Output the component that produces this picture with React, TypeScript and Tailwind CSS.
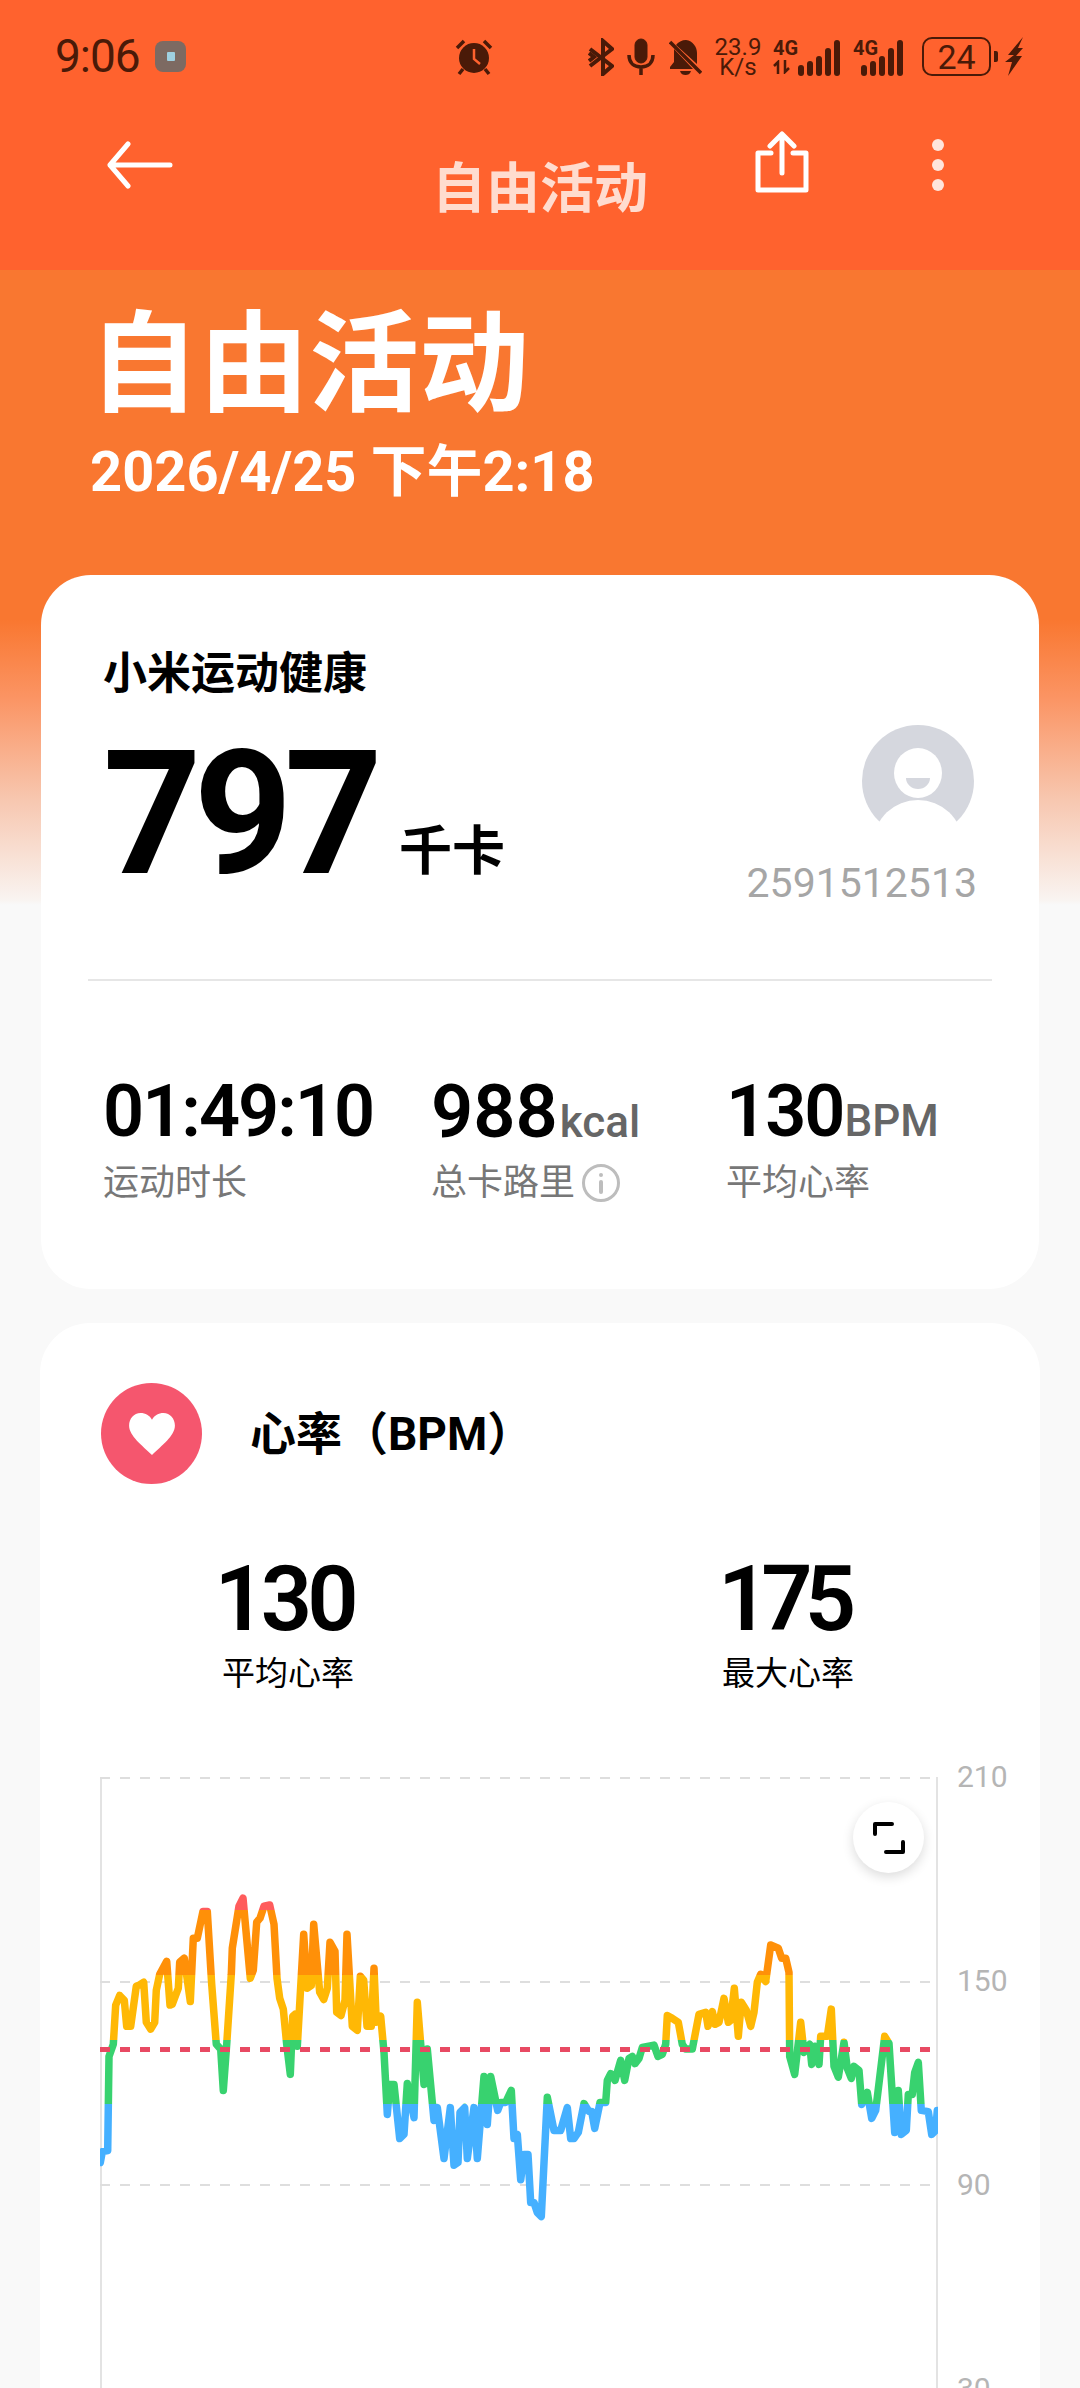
// chart trace, read off the reference: x in px from the axis, y in px from the top grid line
const leftTrace = [
  [124, 1005], [130, 978], [146, 975], [150, 740], [163, 710], [170, 612], [182, 588], [196, 600], [203, 665], [215, 665],
  [232, 565], [240, 562], [254, 555], [262, 655], [275, 672], [287, 655], [292, 575], [302, 535], [323, 503], [333, 612],
  [340, 610], [358, 570], [362, 505], [376, 495], [394, 603], [403, 445], [415, 445], [432, 378], [445, 378], [458, 560],
  [472, 710], [485, 722], [493, 825], [503, 710], [517, 535], [520, 470], [540, 365], [552, 345], [574, 545], [583, 525],
  [593, 405], [603, 395], [615, 365], [632, 362], [645, 410], [654, 545], [662, 595], [673, 622], [683, 710], [694, 785],
  [701, 640], [708, 635], [715, 715], [734, 435], [745, 570], [757, 563], [764, 410], [782, 580], [794, 598], [805, 570],
  [813, 455], [828, 478], [833, 630], [846, 638], [858, 600], [864, 435], [880, 665], [895, 675], [904, 540], [914, 550],
  [924, 665], [937, 665], [945, 520], [952, 655], [965, 640], [975, 730], [985, 885], [992, 810], [1005, 810], [1022, 945],
  [1035, 935], [1045, 808], [1065, 893], [1075, 605], [1095, 810], [1105, 722], [1125, 900], [1135, 868], [1155, 995],
  [1174, 868], [1185, 1012], [1197, 1005], [1203, 880], [1217, 868], [1225, 995], [1245, 868], [1255, 995], [1275, 790],
  [1285, 910], [1295, 790], [1316, 875],
];

const rightTrace = [
  [5, 855], [20, 855], [37, 825], [45, 945], [55, 935], [65, 1048], [75, 985], [87, 985], [95, 1105], [105, 1105],
  [115, 1130], [127, 1140], [145, 842], [165, 925], [185, 925], [205, 868], [215, 945], [225, 945], [238, 930], [255, 858],
  [270, 878], [278, 878], [287, 920], [303, 855], [320, 855], [325, 800], [335, 783], [348, 800], [365, 750], [377, 800],
  [390, 745], [400, 740], [408, 758], [420, 745], [430, 718], [465, 712], [477, 740], [490, 735], [500, 710], [505, 638],
  [520, 645], [538, 655], [550, 710], [560, 722], [580, 722], [600, 635], [620, 630], [627, 665], [640, 628], [648, 660],
  [660, 655], [675, 595], [688, 655], [695, 650], [706, 570], [718, 690], [727, 605], [742, 625], [755, 665], [765, 630],
  [775, 555], [785, 535], [800, 553], [815, 462], [838, 470], [848, 495], [860, 495], [870, 530], [872, 740], [887, 785],
  [905, 655], [915, 730], [932, 710], [938, 760], [948, 715], [960, 760], [965, 690], [985, 690], [997, 622], [1005, 765],
  [1018, 792], [1035, 705], [1045, 770], [1057, 795], [1065, 765], [1080, 775], [1088, 860], [1105, 830], [1118, 895],
  [1130, 875], [1157, 690], [1170, 708], [1187, 930], [1198, 825], [1207, 935], [1222, 925], [1228, 835], [1240, 835],
  [1247, 780], [1258, 755], [1267, 875], [1288, 878], [1298, 935], [1310, 925], [1315, 875],
];

const tracePath = [...leftTrace, ...rightTrace.map(([x, y]) => [x + 1320, y])]
  .map(([x, y], i) => `${i ? "L" : "M"}${(x / 3 - 41).toFixed(1)} ${(y / 2.497 - 17).toFixed(1)}`)
  .join(" ");

const SignalBars = ({ heights }: { heights: number[] }) => (
  <div className="flex items-end gap-[3px]">
    {heights.map((h, i) => (
      <div key={i} className="w-[6px] rounded-[3px] bg-[#4a1a08]" style={{ height: h }} />
    ))}
  </div>
);

const StatusBar = () => (
  <div className="flex h-[39px] items-center pl-[55px] text-[#4a1a08]">
    <span className="w-[86px] text-[46px] leading-[39px] tracking-[-1px]">9:06</span>
    <div className="ml-[14px] flex h-[31px] w-[31px] items-center justify-center rounded-[8px] bg-[#7d6a62]">
      <div className="h-[9px] w-[8px] rounded-[1px] bg-[#9fd0e0]" />
    </div>
    <svg className="ml-[269px] h-[38px] w-[38px]" viewBox="0 0 38 38">
      <circle cx="19" cy="20" r="15" fill="#4a1a08" />
      <path d="M19 11v10l6 5" fill="none" stroke="#ff622e" strokeWidth="2.5" />
      <path d="M2 10 9 3M36 10l-7-7M8 31l-4 5M30 31l4 5" stroke="#4a1a08" strokeWidth="3.5" fill="none" />
    </svg>
    <svg className="ml-[95px] h-[38px] w-[26px]" viewBox="0 0 26 38" fill="none" stroke="#4a1a08" strokeWidth="4">
      <path d="M2 11 24 28l-9 8V3l9 8L2 28" />
      <path d="M1 15l5 4-5 4" />
    </svg>
    <svg className="ml-[13px] h-[38px] w-[28px]" viewBox="0 0 28 38" fill="none" stroke="#4a1a08">
      <rect x="8" y="1" width="12" height="24" rx="6" fill="#4a1a08" />
      <path d="M2 17c0 8 5 12 12 12s12-4 12-12M14 29v8" strokeWidth="3.5" />
    </svg>
    <svg className="ml-[14px] h-[38px] w-[33px]" viewBox="0 0 33 38">
      <path d="M17 2c7 1 11 7 11 13v11L7 7c2-3 6-5 10-5ZM1 29l4-5V11l19 20H1ZM11 33h11c-1 3-3 4-5.500 4s-4.500-1-5.500-4Z" fill="#4a1a08" />
      <path d="M1 4l31 31" stroke="#4a1a08" strokeWidth="3.5" />
    </svg>
    <div className="ml-[14px] flex w-[44px] flex-col items-center text-[24px] leading-[20px]">
      <span>23.9</span>
      <span>K/s</span>
    </div>
    <div className="ml-[13px] flex h-[38px] w-[66px] items-end">
      <div className="flex h-[38px] w-[26px] flex-col">
        <span className="text-[20px] leading-[20px] font-bold">4G</span>
        <svg className="mt-[2px] h-[14px] w-[18px]" viewBox="0 0 18 14" fill="none" stroke="#4a1a08" strokeWidth="2.5">
          <path d="M5 14V2L1 6M12 0v12l4-4" />
        </svg>
      </div>
      <SignalBars heights={[11, 15, 20, 28, 36]} />
    </div>
    <div className="ml-[14px] flex h-[38px] w-[54px] items-end">
      <span className="mb-auto -mr-[18px] w-[26px] text-[20px] leading-[20px] font-bold">4G</span>
      <SignalBars heights={[11, 15, 20, 28, 36]} />
    </div>
    <div className="ml-[15px] flex h-[39px] w-[69px] items-center justify-center rounded-[10px] border-[2.5px] border-[#4a1a08] text-[34px] leading-none">
      24
    </div>
    <div className="ml-[3px] h-[11px] w-[4px] rounded-r-[2px] bg-[#4a1a08]" />
    <svg className="ml-[5px] h-[39px] w-[22px]" viewBox="0 0 18 39">
      <path d="M18 0 3 18h6L0 25h7L3 39l14-20h-6l7-8h-5Z" fill="#4a1a08" />
    </svg>
  </div>
);

const Toolbar = () => (
  <div className="mt-[55px] flex h-[83px] items-start">
    <svg className="mt-[10px] ml-[107px] h-[48px] w-[66px]" viewBox="0 0 66 48" fill="none" stroke="#fff" strokeWidth="5" strokeLinecap="round" strokeLinejoin="round">
      <path d="M3 24H63M21 3 3 24l18 21" />
    </svg>
    <span className="mt-[29px] ml-[259px] text-[54px] leading-[60px] font-bold text-[#ffdccf]">自由活动</span>
    <svg className="ml-[107px] h-[62px] w-[54px]" viewBox="0 0 54 62" fill="none" stroke="#fff" strokeWidth="5" strokeLinecap="round" strokeLinejoin="round">
      <path d="M16 22H3v37h48V22H38" />
      <path d="M27 42V4M15 15 27 3l12 12" />
    </svg>
    <div className="mt-[8px] ml-[123px] flex flex-col gap-[8px]">
      <div className="h-[12px] w-[12px] rounded-full bg-[#ffe5dc]" />
      <div className="h-[12px] w-[12px] rounded-full bg-[#ffe5dc]" />
      <div className="h-[12px] w-[12px] rounded-full bg-[#ffe5dc]" />
    </div>
  </div>
);

const Avatar = () => (
  <svg className="mr-[3px] h-[112px] w-[112px]" viewBox="0 0 112 112">
    <circle cx="56" cy="56" r="56" fill="#d5d7de" />
    <ellipse cx="56" cy="48" rx="24" ry="25" fill="#fff" />
    <path d="M44 53h24a12 11 0 0 1-24 0Z" fill="#d5d7de" />
    <ellipse cx="56" cy="117" rx="44" ry="42" fill="#fff" />
  </svg>
);

const SummaryCard = () => (
  <section className="mx-[41px] mt-[73px] h-[714px] rounded-[50px] bg-white pt-[73px]">
    <h2 className="pl-[62px] text-[44px] leading-[52px] font-bold text-black">小米运动健康</h2>
    <div className="mt-[25px] flex items-start justify-between pr-[62px] pl-[62px]">
      <div className="mt-[26px] flex items-end">
        <span className="text-[172px] leading-[126px] font-bold tracking-[-8px] text-black">797</span>
        <span className="ml-[24px] text-[53px] leading-[50px] font-bold text-black">千卡</span>
      </div>
      <div className="flex flex-col items-end">
        <Avatar />
        <span className="mt-[22px] text-[41px] leading-[48px] text-[#a6a6a6]">2591512513</span>
      </div>
    </div>
    <div className="mx-[47px] mt-[72px] h-[2px] bg-[#e6e6e6]" />
    <div className="mt-[95px] flex pl-[62px]">
      <div className="w-[328px]">
        <div className="text-[72px] leading-[72px] font-semibold tracking-[-2px] text-black">01:49:10</div>
        <div className="mt-[13px] text-[36px] leading-[44px] text-[#777]">运动时长</div>
      </div>
      <div className="w-[295px]">
        <div className="text-[74px] leading-[72px] font-semibold text-black">
          988<span className="ml-[2px] text-[44px] leading-none font-medium text-[#666]">kcal</span>
        </div>
        <div className="mt-[13px] flex items-center text-[36px] leading-[44px] text-[#777]">
          总卡路里
          <span className="ml-[7px] flex h-[38px] w-[38px] items-center justify-center rounded-full border-[3px] border-[#bdbdbd]">
            <span className="flex flex-col items-center gap-[3px]">
              <span className="h-[4px] w-[4px] rounded-full bg-[#bdbdbd]" />
              <span className="h-[14px] w-[4px] rounded-[2px] bg-[#bdbdbd]" />
            </span>
          </span>
        </div>
      </div>
      <div>
        <div className="text-[72px] leading-[72px] font-semibold tracking-[-2px] text-black">
          130<span className="ml-[1px] text-[44px] leading-none font-medium tracking-normal text-[#666]">BPM</span>
        </div>
        <div className="mt-[13px] text-[36px] leading-[44px] text-[#777]">平均心率</div>
      </div>
    </div>
  </section>
);

const HeartChart = () => (
  <div className="mt-[63px] flex items-start pl-[60px]">
    <div className="relative mt-[20px] h-[620px] w-[838px]">
      <svg className="block h-[620px] w-[838px]" viewBox="0 0 838 620">
        <defs>
          <linearGradient id="zones" gradientUnits="userSpaceOnUse" x1="0" y1="0" x2="0" y2="620">
            <stop offset={133 / 620} stopColor="#ff5c5c" />
            <stop offset={133 / 620} stopColor="#ff9008" />
            <stop offset={198 / 620} stopColor="#ff9008" />
            <stop offset={198 / 620} stopColor="#ffb805" />
            <stop offset={263 / 620} stopColor="#ffb805" />
            <stop offset={263 / 620} stopColor="#38d26f" />
            <stop offset={327 / 620} stopColor="#38d26f" />
            <stop offset={327 / 620} stopColor="#45b0ff" />
          </linearGradient>
        </defs>
        <path d="M1 0V620M837 0V620" stroke="#e3e3e3" strokeWidth="2" />
        <path d="M0 1H830M0 205H830M0 408H830" stroke="#dedede" strokeWidth="2" strokeDasharray="10 10" />
        <path d={tracePath} fill="none" stroke="url(#zones)" strokeWidth="7.5" strokeLinejoin="round" strokeLinecap="round" />
        <path d="M0 272.500H830" stroke="#e84a63" strokeWidth="5" strokeDasharray="10 10" />
      </svg>
      <button className="absolute top-[25px] right-[14px] flex h-[71px] w-[71px] items-center justify-center rounded-full bg-white shadow-[0_4px_12px_rgba(0,0,0,0.14)]">
        <svg className="h-[32px] w-[32px]" viewBox="0 0 32 32" fill="none" stroke="#000" strokeWidth="4" strokeLinecap="round" strokeLinejoin="round">
          <path d="M2 12V2h17M30 20v10H13" />
        </svg>
      </button>
    </div>
    <div className="ml-[19px] flex flex-col gap-[164px] text-[30px] leading-[40px] text-[#b5b5b5]">
      <span>210</span>
      <span>150</span>
      <span>90</span>
      <span>30</span>
    </div>
  </div>
);

const HeartRateCard = () => (
  <section className="mx-[40px] mt-[34px] rounded-[50px] bg-white pt-[60px] pb-[40px]">
    <div className="flex items-center pl-[61px]">
      <div className="flex h-[101px] w-[101px] items-center justify-center rounded-full bg-[#f5566e]">
        <svg className="h-[42px] w-[48px]" viewBox="0 0 24 22">
          <path d="M12 22C7 17 0 12 0 6.500 0 3 2.500 0 6 0c2.500 0 4.800 1.300 6 3.500C13.200 1.300 15.500 0 18 0c3.500 0 6 3 6 6.500C24 12 17 17 12 22Z" fill="#fff" />
        </svg>
      </div>
      <h2 className="ml-[48px] text-[46px] leading-[50px] font-bold text-black">心率（BPM）</h2>
    </div>
    <div className="mt-[71px] grid grid-cols-2 text-center">
      <div className="-ml-[4px]">
        <div className="-ml-[8px] text-[90px] leading-[90px] font-semibold tracking-[-5px] text-black">130</div>
        <div className="mt-[9px] text-[33px] leading-[40px] text-black">平均心率</div>
      </div>
      <div className="-ml-[4px]">
        <div className="-ml-[10px] text-[90px] leading-[90px] font-semibold tracking-[-8px] text-black">175</div>
        <div className="mt-[9px] text-[33px] leading-[40px] text-black">最大心率</div>
      </div>
    </div>
    <HeartChart />
  </section>
);

export default function App() {
  return (
    <div className="h-[2388px] w-[1080px] overflow-hidden bg-[linear-gradient(to_bottom,#ff622e_0,#ff622e_270px,#f97730_270px,#f97730_620px,#fb9565_700px,#f7c7b0_800px,#f9f4f1_900px,#f9f9f9_905px)] pt-[37px] font-['Roboto','Noto_Sans_CJK_SC',sans-serif]">
      <StatusBar />
      <Toolbar />
      <h1 className="mt-[87px] pl-[89px] text-[110px] leading-[130px] font-bold text-white">自由活动</h1>
      <p className="mt-[11px] pl-[90px] text-[56px] leading-[60px] font-bold text-white">2026/4/25 下午2:18</p>
      <SummaryCard />
      <HeartRateCard />
    </div>
  );
}
